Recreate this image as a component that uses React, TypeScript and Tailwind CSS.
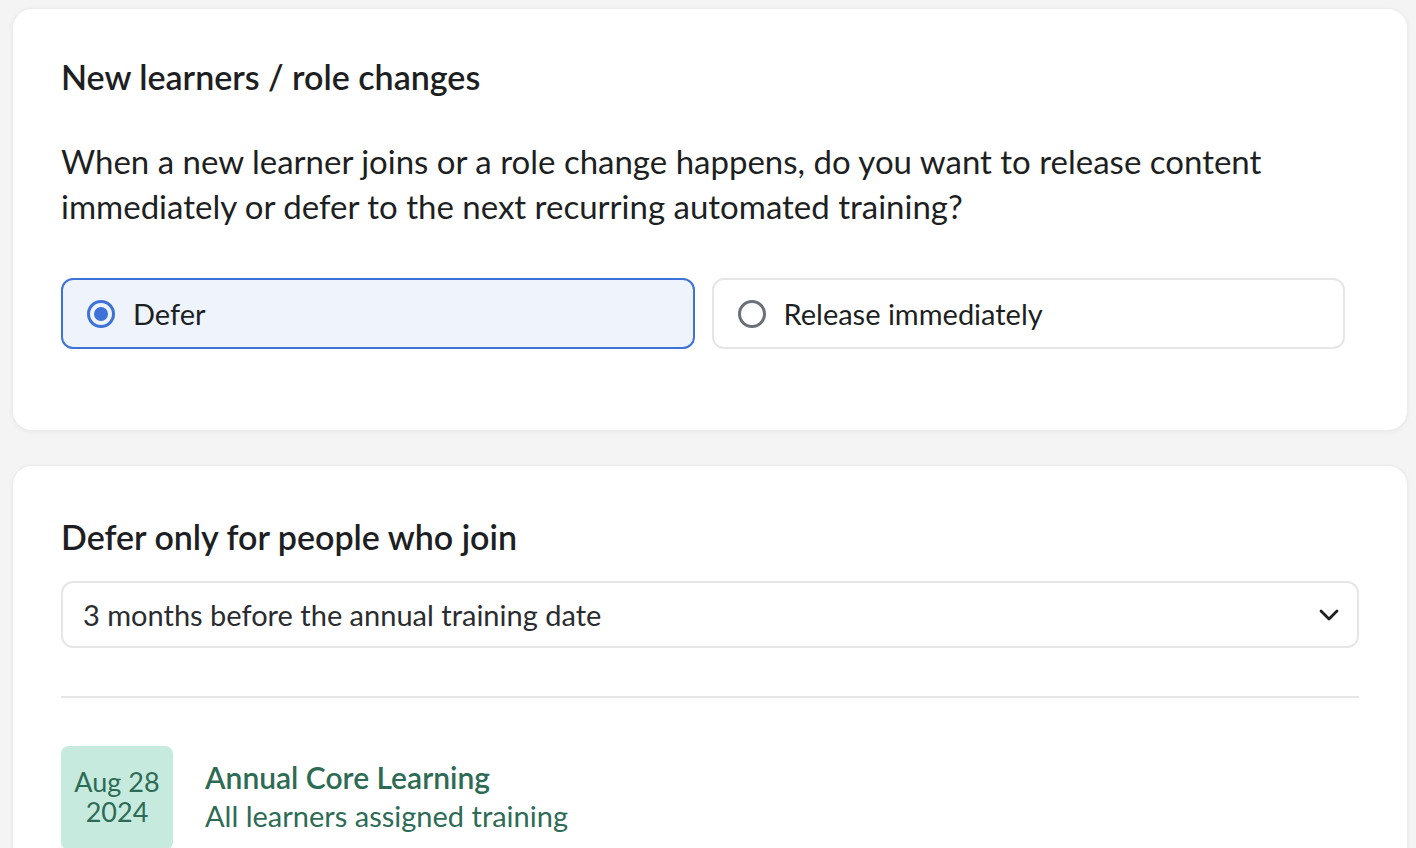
import React from "react";

const font = { fontFamily: "Lato, 'Noto Sans', sans-serif" };

function RadioOption({ label, selected }: { label: string; selected?: boolean }) {
  return (
    <div
      className={`flex h-[71px] items-center gap-[18px] rounded-[12px] px-[24px] ${
        selected
          ? "border-2 border-[#3d72d8] bg-[#eef3fc]"
          : "border-2 border-[#e6e6e6] bg-white"
      }`}
    >
      <span
        className={`flex h-[28px] w-[28px] shrink-0 items-center justify-center rounded-full border-[3px] ${
          selected ? "border-[#3d72d8]" : "border-[#6b7079]"
        }`}
      >
        {selected && <span className="h-[14px] w-[14px] rounded-full bg-[#3d72d8]" />}
      </span>
      <span className="text-[29px] text-[#1d1f23]">{label}</span>
    </div>
  );
}

function Chevron() {
  return (
    <svg width="20" height="14" viewBox="0 0 20 14" fill="none" className="shrink-0">
      <path d="M2 3l8 8 8-8" stroke="#1d1f23" strokeWidth="2.8" strokeLinecap="round" strokeLinejoin="round" />
    </svg>
  );
}

export default function App() {
  return (
    <div style={font} className="min-h-[848px] bg-[#f4f4f4] pl-[12px] pr-[8px] pt-[8px]">
      {/* Release timing */}
      <section className="rounded-[20px] border border-[#ececec] bg-white px-[48px] pb-[81px] pt-[44px] shadow-[0_1px_4px_rgba(0,0,0,0.05)]">
        <h2 className="text-[34px] font-semibold leading-[48px] text-[#1d1f23]">
          New learners / role changes
        </h2>
        <p className="mt-[38px] text-[33px] leading-[45px] text-[#1d1f23]">
          When a new learner joins or a role change happens, do you want to release content
          <br />
          immediately or defer to the next recurring automated training?
        </p>
        <div className="mt-[49px] grid w-[1284px] grid-cols-2 gap-[17px]">
          <RadioOption label="Defer" selected />
          <RadioOption label="Release immediately" />
        </div>
      </section>

      {/* Defer window */}
      <section className="mt-[34px] rounded-t-[20px] border border-[#ececec] bg-white px-[48px] pb-[40px] pt-[47px] shadow-[0_1px_4px_rgba(0,0,0,0.05)]">
        <h2 className="text-[34px] font-semibold leading-[48px] text-[#1d1f23]">
          Defer only for people who join
        </h2>
        <button className="mt-[20px] flex h-[67px] w-full items-center justify-between rounded-[12px] border-2 border-[#e6e6e6] bg-white pl-[20px] pr-[18px] text-left">
          <span className="text-[29px] text-[#2a2c30]">3 months before the annual training date</span>
          <Chevron />
        </button>
        <div className="mt-[48px] h-[2px] bg-[#e6e6e6]" />
        <div className="mt-[48px] flex items-start gap-[32px]">
          <div className="flex h-[104px] w-[112px] shrink-0 flex-col items-center justify-center rounded-[8px] bg-[#c7eadf] pb-[2px] text-[27px] leading-[30px] text-[#2e6b55]">
            <span>Aug 28</span>
            <span>2024</span>
          </div>
          <div className="pt-[12px]">
            <div className="text-[30px] font-semibold leading-[38px] text-[#2e6b55]">Annual Core Learning</div>
            <div className="text-[29px] leading-[40px] text-[#2e6b55]">All learners assigned training</div>
          </div>
        </div>
      </section>
    </div>
  );
}
